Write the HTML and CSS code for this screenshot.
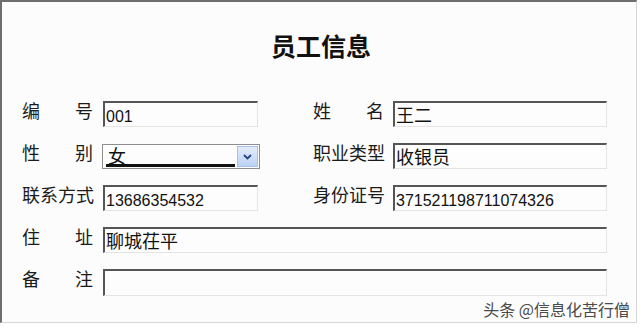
FILE: index.html
```html
<!DOCTYPE html>
<html lang="zh">
<head>
<meta charset="utf-8">
<title>员工信息</title>
<link rel="stylesheet" href="styles.css">
</head>
<body>
<div class="frame">
  <h1 class="title">员工信息</h1>
  <div class="form">
    <div class="row">
      <div class="label spread"><span>编</span><span>号</span></div>
      <div class="field short"><span class="num">001</span></div>
      <div class="label spread right"><span>姓</span><span>名</span></div>
      <div class="field long">王二</div>
    </div>
    <div class="row">
      <div class="label spread"><span>性</span><span>别</span></div>
      <div class="combo">
        <span class="combo-text">女</span>
        <span class="combo-btn">
          <svg width="9" height="6" viewBox="0 0 9 6"><path d="M1 1 L4.5 4.5 L8 1" fill="none" stroke="#23457f" stroke-width="1.8"/></svg>
        </span>
      </div>
      <div class="label right">职业类型</div>
      <div class="field long">收银员</div>
    </div>
    <div class="row">
      <div class="label">联系方式</div>
      <div class="field short"><span class="num">13686354532</span></div>
      <div class="label right">身份证号</div>
      <div class="field long"><span class="num">371521198711074326</span></div>
    </div>
    <div class="row">
      <div class="label spread"><span>住</span><span>址</span></div>
      <div class="field full">聊城茌平</div>
    </div>
    <div class="row">
      <div class="label spread"><span>备</span><span>注</span></div>
      <div class="field full tall"></div>
    </div>
  </div>
  <div class="watermark">头条 @信息化苦行僧</div>
</div>
</body>
</html>
```

FILE: styles.css
```css
html, body {
  margin: 0;
  padding: 0;
  background: #ffffff;
}
body {
  width: 640px;
  height: 327px;
  overflow: hidden;
  font-family: "Noto Sans CJK SC", "Noto Sans", sans-serif;
}
.frame {
  position: relative;
  box-sizing: border-box;
  width: 637px;
  height: 323px;
  background: #fcfcfc;
  border-top: 2px solid #6e6e6e;
  border-left: 2px solid #6e6e6e;
  border-right: 1px solid #d6d6d6;
  border-bottom: 1px solid #d6d6d6;
}
.title {
  margin: 28px 0 0 0;
  height: 30px;
  line-height: 30px;
  font-size: 25px;
  font-weight: bold;
  text-align: center;
  color: #111;
  padding-left: 4px;
}
.form {
  margin-top: 41px;
  padding-left: 20px;
  display: flex;
  flex-direction: column;
  gap: 16px;
}
.row {
  display: flex;
  align-items: flex-start;
  height: 26px;
}
.label {
  width: 71px;
  margin-right: 10px;
  font-size: 18px;
  line-height: 18px;
  color: #1b1b1b;
  white-space: nowrap;
}
.label.right {
  margin-left: 55px;
  margin-right: 9px;
}
.spread {
  display: flex;
  justify-content: space-between;
}
.field {
  box-sizing: border-box;
  height: 26px;
  border-top: 2px solid #555;
  border-left: 2px solid #555;
  border-right: 1px solid #e4e4e4;
  border-bottom: 1px solid #e4e4e4;
  background: #fdfdfd;
  padding-left: 1px;
  font-size: 18px;
  line-height: 23px;
  color: #111;
  white-space: nowrap;
  overflow: hidden;
}
.field.short { width: 155px; }
.field.long { width: 214px; }
.field.full { width: 504px; }
.field.tall { height: 27px; }
.num {
  font-family: "Liberation Sans", Arial, sans-serif;
  font-size: 16px;
}
.combo {
  box-sizing: border-box;
  width: 158px;
  height: 25px;
  margin-top: 1px;
  margin-left: -1px;
  margin-right: -2px;
  border: 1px solid #8e8e8e;
  background: #fdfdfd;
  display: flex;
  align-items: flex-start;
  padding: 1px 1px 0 3px;
}
.combo-text {
  box-sizing: border-box;
  width: 129px;
  height: 21px;
  font-size: 18px;
  line-height: 18px;
  padding-left: 2px;
  color: #111;
  border-bottom: 3px solid #111;
}
.combo-btn {
  box-sizing: border-box;
  margin-left: auto;
  width: 21px;
  height: 21px;
  border: 1px solid #a9c0e6;
  background: linear-gradient(#e3ecfb, #bcd2f4);
  display: flex;
  align-items: center;
  justify-content: center;
}
.watermark {
  position: absolute;
  right: 6px;
  bottom: 4px;
  font-size: 16px;
  line-height: 18px;
  color: #4a4a4a;
  text-shadow: 0 0 2px #fff, 0 0 1px #fff;
  white-space: nowrap;
}
```
